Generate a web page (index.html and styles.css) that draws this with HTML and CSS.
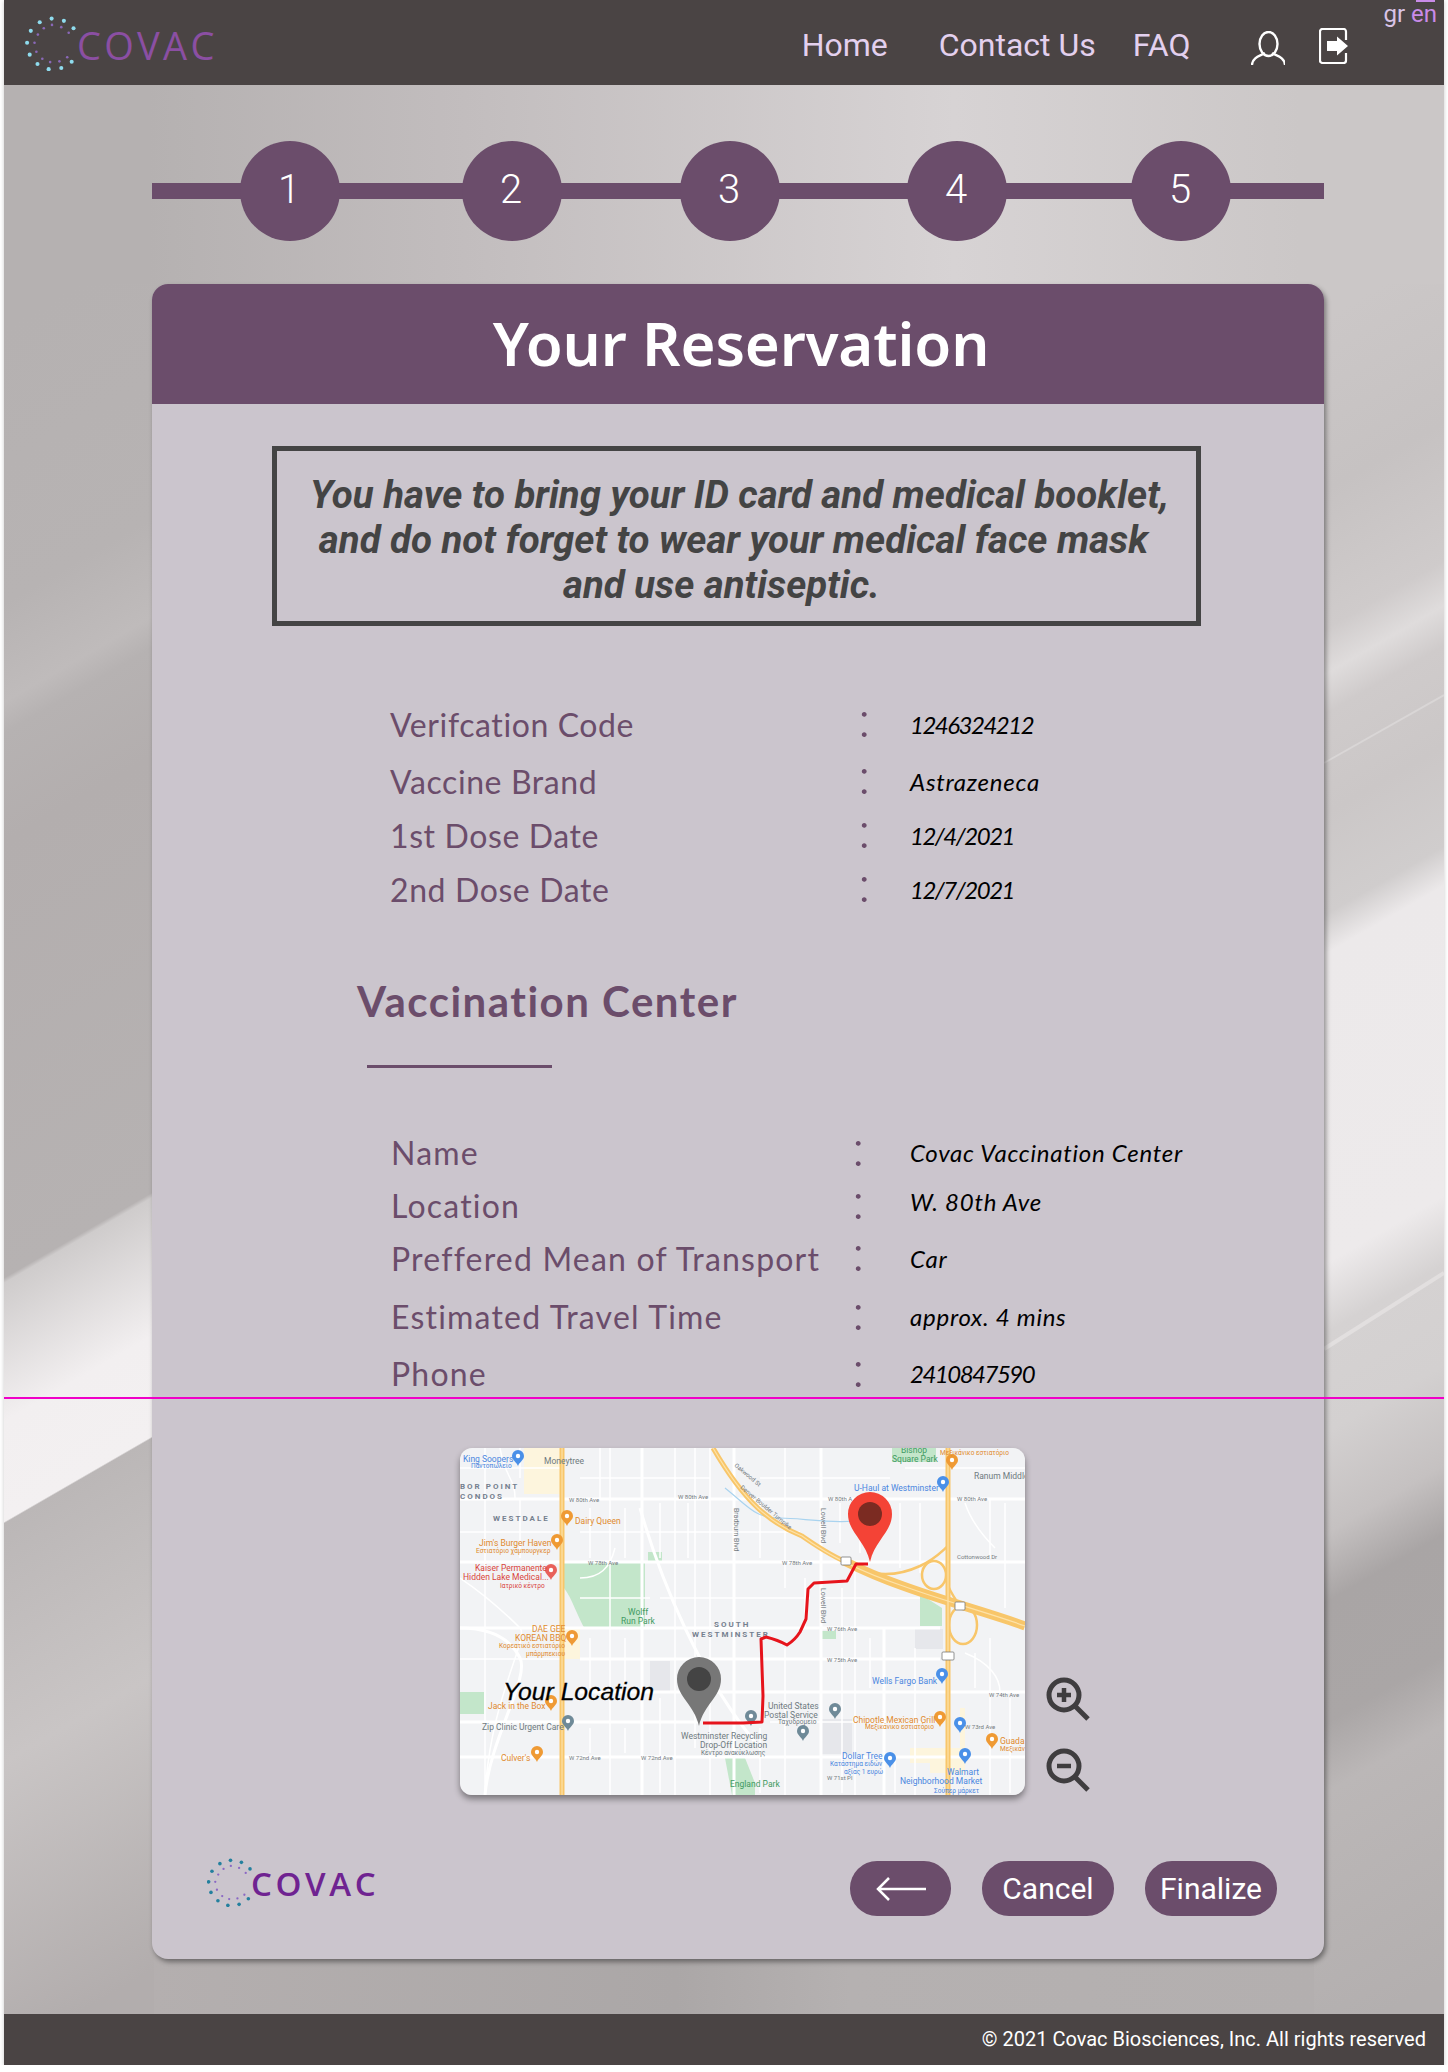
FILE: index.html
```html
<!DOCTYPE html>
<html lang="en">
<head>
<meta charset="utf-8">
<title>Your Reservation - Covac</title>
<link rel="stylesheet" href="styles.css">
</head>
<body>
<svg class="defs" width="0" height="0" aria-hidden="true">
  <defs>
    <symbol id="dots" viewBox="48 52 136 148">
      <g class="dots-outer">
        <circle cx="119" cy="59" r="5.500"/><circle cx="152" cy="65" r="5.500"/><circle cx="178" cy="85" r="5.500"/><circle cx="87" cy="69" r="5.500"/><circle cx="63" cy="92" r="5.500"/><circle cx="53" cy="124" r="5.500"/><circle cx="60" cy="156" r="5.500"/><circle cx="81" cy="181" r="5.500"/><circle cx="111" cy="195" r="5.500"/><circle cx="145" cy="192" r="5.500"/><circle cx="173" cy="175" r="5.500"/>
      </g>
      <g class="dots-inner">
        <circle cx="120" cy="76" r="3.5"/><circle cx="145" cy="82" r="3.5"/><circle cx="165" cy="97" r="3.5"/><circle cx="98" cy="85" r="3.5"/><circle cx="82" cy="102" r="3.5"/><circle cx="73" cy="124" r="3.5"/><circle cx="78" cy="148" r="3.5"/><circle cx="94" cy="167" r="3.5"/><circle cx="115" cy="176" r="3.5"/><circle cx="140" cy="174" r="3.5"/><circle cx="161" cy="163" r="3.5"/>
      </g>
    </symbol>
    <g id="mpin"><path d="M0 7C-1.500 3-6 1-6-3A6 6 0 1 1 6-3C6 1 1.500 3 0 7Z"/><circle cy="-3" r="2.200" fill="#fff"/></g>
  </defs>
</svg>
<div class="page">
  <svg class="backdrop" viewBox="0 0 1440 2065" aria-hidden="true">
    <defs>
      <linearGradient id="topstrip" x1="0" y1="0" x2="1" y2="0">
        <stop offset="0" stop-color="#b5b1b1"/><stop offset=".1" stop-color="#b5b1b1"/><stop offset=".32" stop-color="#c2bdbe"/><stop offset=".66" stop-color="#d7d3d4"/><stop offset=".9" stop-color="#cbc7c7"/><stop offset="1" stop-color="#cbc7c7"/>
      </linearGradient>
      <linearGradient id="leftcol" gradientUnits="userSpaceOnUse" x1="74" y1="284" x2="823" y2="1581">
        <stop offset="0" stop-color="#b5b1b1"/><stop offset=".16" stop-color="#b7b3b3"/><stop offset=".217" stop-color="#bfbbbb"/><stop offset=".235" stop-color="#b6b2b2"/><stop offset=".298" stop-color="#b3aeae"/><stop offset=".55" stop-color="#b6b2b2"/><stop offset=".553" stop-color="#cfcccc"/><stop offset=".633" stop-color="#f2eff0"/><stop offset=".691" stop-color="#f3f0f1"/><stop offset=".692" stop-color="#bbb7b7"/><stop offset=".83" stop-color="#c9c5c5"/><stop offset="1" stop-color="#b2adad"/>
      </linearGradient>
      <linearGradient id="rightcol" gradientUnits="userSpaceOnUse" x1="1380" y1="284" x2="2129" y2="1581">
        <stop offset="0" stop-color="#cbc7c7"/><stop offset=".1" stop-color="#c6c2c2"/><stop offset=".18" stop-color="#cfcbcb"/><stop offset=".206" stop-color="#dfdcdc"/><stop offset=".229" stop-color="#cfcbcb"/><stop offset=".287" stop-color="#cbc7c7"/><stop offset=".345" stop-color="#d0cdcd"/><stop offset=".368" stop-color="#ece9ea"/><stop offset=".547" stop-color="#edeaeb"/><stop offset=".587" stop-color="#d5d2d2"/><stop offset=".645" stop-color="#d3d0d0"/><stop offset=".703" stop-color="#c5c1c1"/><stop offset=".743" stop-color="#a9a5a5"/><stop offset=".813" stop-color="#aaa6a6"/><stop offset=".853" stop-color="#bbb7b7"/><stop offset="1" stop-color="#b3afaf"/>
      </linearGradient>
      <linearGradient id="bottomstrip" x1="0" y1="0" x2="1" y2="0">
        <stop offset="0" stop-color="#b4afaf"/><stop offset=".45" stop-color="#aba7a7"/><stop offset=".6" stop-color="#b5b1b1"/><stop offset="1" stop-color="#b3afaf"/>
      </linearGradient>
    </defs>
    <rect x="0" y="85" width="1440" height="220" fill="url(#topstrip)"/>
    <rect x="0" y="284" width="170" height="1730" fill="url(#leftcol)"/>
    <rect x="1300" y="284" width="140" height="1730" fill="url(#rightcol)"/>
    <rect x="150" y="1940" width="1160" height="74" fill="url(#bottomstrip)"/>
    <path d="M1320 763L1440 695" stroke="#d9d6d6" stroke-width="2"/>
    <path d="M1320 1349L1440 1273" stroke="#e2dfdf" stroke-width="4"/>
  </svg>

  <header class="topbar">
    <a class="brand">
      <svg class="brand-dots brand-dots-light"><use href="#dots"/></svg>
      <span class="brand-name">COVAC</span>
    </a>
    <nav class="nav">
      <a class="nav-home">Home</a>
      <a class="nav-contact">Contact Us</a>
      <a class="nav-faq">FAQ</a>
    </nav>
    <svg class="icon-user" viewBox="0 0 34 34" aria-label="Profile">
      <ellipse cx="17.500" cy="13" rx="9" ry="12"/>
      <path d="M1 33.500C2 26 9 25 13 22.500M34 33.500C33 26 26 25 22 22.500"/>
    </svg>
    <svg class="icon-logout" viewBox="0 0 30 36" aria-label="Log out">
      <path class="outline" d="M27 12V3.500A2.500 2.500 0 0 0 24.500 1H3.500A2.500 2.500 0 0 0 1 3.500V32.500A2.500 2.500 0 0 0 3.500 35H24.500A2.500 2.500 0 0 0 27 32.500V25"/>
      <path class="solid" d="M8 13H18V8.500L29 18L18 27.500V23H8Z"/>
    </svg>
    <div class="lang"><span class="lang-gr">gr</span> <span class="lang-en">en</span></div>
  </header>

  <ol class="stepper">
    <li class="step">1</li>
    <li class="step">2</li>
    <li class="step">3</li>
    <li class="step">4</li>
    <li class="step">5</li>
  </ol>

  <main class="card">
    <h1 class="card-title">Your Reservation</h1>

    <p class="notice">
      <span class="notice-line notice-line-a">You have to bring your ID card and medical booklet,</span>
      <span class="notice-line notice-line-b">and do not forget to wear your medical face mask</span>
      <span class="notice-line notice-line-c">and use antiseptic.</span>
    </p>

    <dl class="info info-reservation">
      <dt>Verifcation Code</dt><dd class="colon">:</dd><dd class="value digits">1246324212</dd>
      <dt>Vaccine Brand</dt><dd class="colon">:</dd><dd class="value">Astrazeneca</dd>
      <dt>1st Dose Date</dt><dd class="colon">:</dd><dd class="value digits">12/4/2021</dd>
      <dt>2nd Dose Date</dt><dd class="colon">:</dd><dd class="value digits">12/7/2021</dd>
    </dl>

    <h2 class="section-title">Vaccination Center</h2>
    <hr class="section-rule">

    <dl class="info info-center">
      <dt>Name</dt><dd class="colon">:</dd><dd class="value">Covac Vaccination Center</dd>
      <dt>Location</dt><dd class="colon">:</dd><dd class="value value-up">W. 80th Ave</dd>
      <dt>Preffered Mean of Transport</dt><dd class="colon">:</dd><dd class="value">Car</dd>
      <dt>Estimated Travel Time</dt><dd class="colon">:</dd><dd class="value">approx. 4 mins</dd>
      <dt>Phone</dt><dd class="colon">:</dd><dd class="value digits">2410847590</dd>
    </dl>

    <section class="map-row">
      <svg class="map" viewBox="0 0 565 347" aria-label="Map of the route">
        <rect width="565" height="347" fill="#f2f3f5"/>
        <g fill="#fdf5dd">
          <rect x="64" y="0" width="36" height="46"/><rect x="104" y="181" width="16" height="30"/>
          <path d="M450 300H500V260H505V325H470V315H450Z"/>
        </g>
        <g fill="#c3e6ca">
          <path d="M104 114H185V181H125C118 170 112 150 104 140Z"/>
          <rect x="0" y="244" width="24" height="22"/>
          <path d="M265 310H285L295 335V347H272Z"/>
          <rect x="432" y="0" width="44" height="14"/>
          <path d="M460 146L482 160V178H460Z"/>
          <rect x="361" y="183" width="15" height="8"/>
          <rect x="188" y="104" width="14" height="10"/>
        </g>
        <g fill="#e6e7eb">
          <rect x="361" y="271" width="31" height="35"/><rect x="455" y="181" width="28" height="20"/><rect x="190" y="213" width="20" height="30"/>
        </g>
        <g class="road-minor">
          <path d="M0 20H100M120 30H250M300 30H430M445 20H565M0 84H100M120 84H340M120 150H190M200 150H350M360 150H460M0 211H100M120 211H250M310 211H480M120 244H250M310 244H480M500 244H565M0 274H100M120 274H240M310 274H480M25 0V347M60 0V30M60 50V110M150 0V347M215 0V347M235 0V300M250 0V347M325 0V140M325 200V347M395 120V347M455 200V347M530 50V110M530 190V347M0 130C30 150 50 170 60 180S30 250 25 347"/>
          <path d="M130 60V110M140 0V50M165 60V110M200 55V110M228 55V110M300 55V110M380 55V95M400 55V105M440 55V120M460 55V125M130 190V240M165 190V240M200 250V345M300 280V345M345 130V180M382 140V345M410 190V240M515 205V240M545 55V160M130 280V305M165 280V305M435 345V310M550 250V345M505 55C510 70 520 85 535 100M505 205C530 215 540 230 540 244M120 130C140 130 150 120 155 100M40 0C45 30 55 30 55 50"/>
        </g>
        <g class="road-major">
          <path d="M0 51H565M0 114H565M0 180H480M120 211H480M120 244H565M0 274H240M0 309H565M182 0V347M274 0V347M361 0V347M424 180V347"/>
          <path d="M0 180C30 180 50 190 60 210S30 290 25 347M180 60C200 130 240 230 300 300"/>
        </g>
        <path class="river" d="M265 40C290 60 295 70 320 70S380 78 420 70"/>
        <g class="road-yellow">
          <path d="M102 0V347"/><path d="M488 0V347"/>
          <path d="M253 0C285 55 310 75 342 88C355 97 368 106 384 113"/>
        </g>
        <path class="road-yellow-wide" d="M384 113C400 121 420 130 443 138C490 155 530 165 565 178"/>
        <g class="road-ramp">
          <path d="M401 122C425 130 445 125 460 118S480 105 488 98"/>
          <ellipse cx="474" cy="127" rx="12" ry="14"/>
          <ellipse cx="503" cy="177" rx="14" ry="19"/>
          <path d="M486 132C490 145 495 150 500 158"/>
        </g>
        <g class="road-yellow-core">
          <path d="M102 0V347"/><path d="M488 0V347"/>
          <path d="M253 0C285 55 310 75 342 88C365 105 395 122 443 138C490 155 530 165 565 178"/>
        </g>
        <g class="shield" transform="translate(386 113)"><rect x="-5" y="-4" width="10" height="8" rx="1"/></g>
        <g class="shield" transform="translate(500 158)"><rect x="-5" y="-4" width="10" height="8" rx="1"/></g>
        <g class="shield" transform="translate(488 208)"><rect x="-6" y="-4" width="12" height="8" rx="1"/></g>

        <g class="mp-blue"><use href="#mpin" x="58" y="11"/><use href="#mpin" x="483" y="37"/><use href="#mpin" x="482" y="229"/><use href="#mpin" x="500" y="278"/><use href="#mpin" x="430" y="313"/><use href="#mpin" x="505" y="309"/></g>
        <g class="mp-orange"><use href="#mpin" x="107" y="71"/><use href="#mpin" x="97" y="95"/><use href="#mpin" x="112" y="191"/><use href="#mpin" x="91" y="256"/><use href="#mpin" x="77" y="307"/><use href="#mpin" x="492" y="15"/><use href="#mpin" x="480" y="272"/><use href="#mpin" x="532" y="294"/></g>
        <g class="mp-red"><use href="#mpin" x="91" y="125"/></g>
        <g class="mp-gray"><use href="#mpin" x="108" y="276"/><use href="#mpin" x="291" y="271"/><use href="#mpin" x="343" y="286"/><use href="#mpin" x="375" y="264"/></g>

        <g class="ml ml-blue">
          <text x="3" y="14">King Soopers</text><text class="ml-s" x="11" y="20">Παντοπωλείο</text>
          <text x="394" y="43">U-Haul at Westminster</text><text x="412" y="236">Wells Fargo Bank</text>
          <text x="382" y="311">Dollar Tree</text><text class="ml-s" x="370" y="318">Κατάστημα ειδών</text><text class="ml-s" x="384" y="326">αξίας 1 ευρώ</text>
          <text x="487" y="327">Walmart</text><text x="440" y="336">Neighborhood Market</text><text class="ml-s" x="474" y="345">Σούπερ μάρκετ</text>
        </g>
        <g class="ml ml-orange">
          <text x="115" y="76">Dairy Queen</text><text x="19" y="98">Jim's Burger Haven</text><text class="ml-s" x="16" y="105">Εστιατόριο χάμπουργκερ</text>
          <text x="72" y="184">DAE GEE</text><text x="55" y="193">KOREAN BBQ</text><text class="ml-s" x="39" y="200">Κορεατικό εστιατόριο</text><text class="ml-s" x="66" y="208">μπάρμπεκιου</text>
          <text x="28" y="261">Jack in the Box</text><text x="41" y="313">Culver's</text>
          <text class="ml-s" x="480" y="7">Μεξικάνικο εστιατόριο</text>
          <text x="393" y="275">Chipotle Mexican Grill</text><text class="ml-s" x="405" y="281">Μεξικάνικο εστιατόριο</text>
          <text x="540" y="296">Guada</text><text class="ml-s" x="540" y="303">Μεξικάν</text>
        </g>
        <g class="ml ml-red">
          <text x="15" y="123">Kaiser Permanente</text><text x="3" y="132">Hidden Lake Medical...</text><text class="ml-s" x="40" y="140">Ιατρικό κέντρο</text>
        </g>
        <g class="ml ml-green">
          <text x="168" y="167">Wolff</text><text x="161" y="176">Run Park</text><text x="270" y="339">England Park</text>
          <text x="441" y="5">Bishop</text><text x="432" y="14">Square Park</text>
        </g>
        <g class="ml ml-gray">
          <text x="84" y="16">Moneytree</text><text x="514" y="31">Ranum Middle</text>
          <text x="22" y="282">Zip Clinic Urgent Care</text>
          <text x="221" y="291">Westminster Recycling</text><text x="240" y="300">Drop-Off Location</text><text class="ml-s" x="241" y="307">Κέντρο ανακύκλωσης</text>
          <text x="308" y="261">United States</text><text x="304" y="270">Postal Service</text><text class="ml-s" x="318" y="276">Ταχυδρομείο</text>
        </g>
        <g class="ml-road">
          <text x="109" y="54">W 80th Ave</text><text x="218" y="51">W 80th Ave</text><text x="368" y="53">W 80th A</text><text x="497" y="53">W 80th Ave</text>
          <text x="128" y="117">W 78th Ave</text><text x="322" y="117">W 78th Ave</text><text x="497" y="111">Cottonwood Dr</text>
          <text x="367" y="183">W 76th Ave</text><text x="367" y="214">W 75th Ave</text><text x="529" y="249">W 74th Ave</text><text x="505" y="281">W 73rd Ave</text>
          <text x="109" y="312">W 72nd Ave</text><text x="181" y="312">W 72nd Ave</text><text x="367" y="332">W 71st Pl</text>
          <text x="274" y="18" transform="rotate(40 274 18)">Oakwood St</text>
          <text x="280" y="40" transform="rotate(40 280 40)">Denver-Boulder Turnpike</text>
          <text class="ml-vert" x="274" y="60" transform="rotate(90 274 60)">Bradburn Blvd</text>
          <text class="ml-vert" x="361" y="60" transform="rotate(90 361 60)">Lowell Blvd</text>
          <text class="ml-vert" x="361" y="140" transform="rotate(90 361 140)">Lowell Blvd</text>
        </g>
        <g class="ml-area">
          <text x="0" y="41">BOR POINT</text><text x="0" y="51">CONDOS</text><text x="33" y="73">WESTDALE</text><text x="254" y="179">SOUTH</text><text x="232" y="189">WESTMINSTER</text>
        </g>

        <path class="route" d="M243 275L283 275L302 274L303 248L301 191L306 189Q318 192 327 197Q335 192 340 184L346 171L348 141L354 135L387 133L396 116L408 116"/>
        <path class="pin-red" d="M410 114C405 92 388 84 388 66A22 22 0 1 1 432 66C432 84 415 92 410 114Z"/>
        <circle class="pin-red-core" cx="410" cy="66" r="12"/>
        <path class="pin-gray" d="M239 278C234 256 217 249 217 231A22 22 0 1 1 261 231C261 249 244 256 239 278Z"/>
        <circle class="pin-gray-core" cx="239" cy="231" r="12"/>
        <text class="map-you" x="43" y="252">Your Location</text>
      </svg>
      <div class="zoom-tools">
        <svg class="zoom-icon" viewBox="0 0 44 44" aria-label="Zoom in">
          <circle cx="18" cy="18" r="15"/><path d="M29 29L42 42"/><path class="glyph" d="M11 18H25M18 11V25"/>
        </svg>
        <svg class="zoom-icon" viewBox="0 0 44 44" aria-label="Zoom out">
          <circle cx="18" cy="18" r="15"/><path d="M29 29L42 42"/><path class="glyph" d="M11 18H25"/>
        </svg>
      </div>
    </section>

    <div class="card-foot">
      <div class="foot-brand">
        <svg class="foot-dots"><use href="#dots"/></svg>
        <span class="foot-name">COVAC</span>
      </div>
      <div class="actions">
        <button class="btn btn-back" aria-label="Back">
          <svg class="back-arrow" viewBox="0 0 50 24"><path d="M50 12H3M13 1L2 12L13 23"/></svg>
        </button>
        <button class="btn">Cancel</button>
        <button class="btn">Finalize</button>
      </div>
    </div>
  </main>

  <div class="magenta-rule"></div>

  <footer class="bottombar">© 2021 Covac Biosciences, Inc. All rights reserved</footer>
</div>
</body>
</html>
```

FILE: styles.css
```css
* { box-sizing: border-box; }
html, body { margin: 0; padding: 0; background: #fff; }
body { font-family: "Roboto", "Liberation Sans", sans-serif; }

.defs { position: absolute; }
.dots-outer { fill: var(--dot-outer, #24809e); }
.dots-inner { fill: var(--dot-inner, #8a68c4); }

.page {
  position: relative;
  width: 1440px;
  margin-left: 4px;
  display: flex;
  flex-direction: column;
  box-shadow: 0 1px 4px rgba(0, 0, 0, .22);
}
.backdrop { position: absolute; left: 0; top: 0; width: 1440px; height: 2065px; }

/* top bar */
.topbar {
  position: relative;
  height: 85px;
  background: #4a4444;
  display: flex;
  align-items: flex-start;
}
.brand { display: flex; align-items: flex-start; margin: 16px 0 0 21px; }
.brand-dots { width: 51px; height: 55px; }
.brand-dots-light { --dot-outer: #8fdcee; --dot-inner: #8a68b8; }
.brand-name {
  font-family: "Open Sans", sans-serif;
  font-size: 38px;
  font-weight: 500;
  line-height: 52px;
  margin: 3px 0 0 1px;
  letter-spacing: 3.3px;
  color: #8b4fa3;
}
.nav {
  display: flex;
  margin: 24px 0 0 584px;
  font-size: 32px;
  line-height: 42px;
  color: #e3d0ee;
}
.nav-contact { margin-left: 51px; }
.nav-faq { margin-left: 37px; }
.icon-user { width: 34px; height: 34px; margin: 31px 0 0 60px; flex: none; }
.icon-user ellipse, .icon-user path { fill: none; stroke: #fff; stroke-width: 2.4; stroke-linecap: round; }
.icon-logout { width: 30px; height: 36px; margin: 28px 0 0 34px; flex: none; }
.icon-logout .outline { fill: none; stroke: #fff; stroke-width: 2.2; }
.icon-logout .solid { fill: #fff; }
.lang {
  position: absolute;
  right: 7px;
  top: 0;
  font-size: 24px;
  line-height: 28px;
  color: #d8c3e6;
}
.lang-en { color: #c98be8; position: relative; }
.lang-en::before {
  content: "";
  position: absolute;
  left: 5px;
  right: 2px;
  top: 0;
  height: 2px;
  background: #c98be8;
}

/* stepper */
.stepper {
  position: relative;
  list-style: none;
  width: 1172px;
  height: 100px;
  margin: 56px 0 0 148px;
  padding: 0 0 0 88px;
  display: grid;
  grid-template-columns: 222px 218px 227px 224px 100px;
  background: linear-gradient(#6b4d6b, #6b4d6b) center / 100% 16px no-repeat;
}
.step {
  width: 100px;
  height: 100px;
  border-radius: 50%;
  background: #6b4d6b;
  color: #fff;
  font-size: 40px;
  font-weight: 300;
  line-height: 98px;
  text-align: center;
  padding-right: 2px;
}

/* card */
.card {
  position: relative;
  width: 1172px;
  margin: 43px 0 0 148px;
  background: #cbc5cd;
  border-radius: 16px;
  box-shadow: 2px 3px 5px rgba(0, 0, 0, .4);
  padding-bottom: 43px;
}
.card-title {
  margin: 0;
  height: 120px;
  background: #6b4d6b;
  border-radius: 16px 16px 0 0;
  color: #fff;
  font-family: "Noto Sans", sans-serif;
  font-size: 60px;
  font-weight: 600;
  line-height: 118px;
  letter-spacing: -.15px;
  text-align: center;
  padding-left: 6px;
}
.notice {
  width: 929px;
  height: 180px;
  margin: 42px 0 0 120px;
  padding-top: 21px;
  border: 5px solid #444;
  color: #444;
  font-size: 38.4px;
  font-weight: 700;
  font-style: italic;
  line-height: 45px;
  text-align: center;
}
.notice-line { display: block; white-space: nowrap; }
.notice-line-a { padding-left: 6px; }
.notice-line-b { padding-right: 6px; }
.notice-line-c { padding-right: 30px; }

.info {
  display: grid;
  margin: 0 0 0 239px;
  grid-template-columns: 462px 57px 1fr;
  align-items: center;
  font-family: "Lato", sans-serif;
}
.info dt { font-size: 32px; color: #6b4d6b; white-space: nowrap; }
.info dd { margin: 0; }
.info .colon {
  font-size: 52px;
  font-weight: 300;
  color: #6b4d6b;
  line-height: 40px;
  padding-bottom: 14px;
}
.info .value { font-size: 24px; font-style: italic; letter-spacing: .75px; color: #000; }
.info .digits { letter-spacing: -1.5px; }
.info .value-up { padding-bottom: 8px; }
.info-reservation { margin-top: 71px; grid-template-rows: 54px 60px 48px 60px; }
.info-reservation dt { letter-spacing: .6px; margin-left: -1px; }
.info-reservation .colon { padding-left: 5px; }
.info-center { margin-top: 58px; grid-template-rows: 53px 53px 52px 65px 49px; }
.info-center dt { letter-spacing: 1.2px; }
.info-center .colon { margin-left: -1px; }

.section-title {
  margin: 52px 0 0 205px;
  font-family: "Lato", sans-serif;
  font-size: 42px;
  font-weight: 700;
  line-height: 60px;
  letter-spacing: 1.5px;
  color: #6b4d6b;
}
.section-rule {
  width: 185px;
  height: 3px;
  margin: 34px 0 0 215px;
  border: 0;
  background: #6b4d6b;
}

/* map */
.map-row { display: flex; align-items: flex-end; margin: 50px 0 0 308px; }
.map {
  display: block;
  width: 565px;
  height: 347px;
  border-radius: 12px;
  box-shadow: 0 4px 6px rgba(0, 0, 0, .4);
}
.road-minor { fill: none; stroke: #fff; stroke-width: 1.5; }
.road-major { fill: none; stroke: #fff; stroke-width: 3; }
.river { fill: none; stroke: #a9d3ef; stroke-width: 1.2; }
.road-yellow { fill: none; stroke: #f8c66a; stroke-width: 5; }
.road-yellow-wide { fill: none; stroke: #f8c66a; stroke-width: 9; }
.road-ramp { fill: none; stroke: #f8c66a; stroke-width: 2.5; }
.road-yellow-core { fill: none; stroke: #fde2a8; stroke-width: 1.2; }
.shield rect { fill: #fff; stroke: #777; stroke-width: .8; }
.mp-blue { fill: #4a90e8; }
.mp-orange { fill: #ef9a34; }
.mp-red { fill: #e8605a; }
.mp-gray { fill: #6f8a98; }
.ml { font-family: "Roboto", sans-serif; font-size: 8.5px; }
.ml-s { font-size: 6.5px; }
.ml-blue { fill: #4a86e0; }
.ml-orange { fill: #e08a2e; }
.ml-red { fill: #d9433b; }
.ml-green { fill: #3f9a62; }
.ml-gray { fill: #6e7a80; }
.ml-road { font-family: "Roboto", sans-serif; font-size: 6px; fill: #747b80; }
.ml-vert { font-size: 7px; }
.ml-area { font-family: "Roboto", sans-serif; font-size: 8px; font-weight: 700; letter-spacing: 2px; fill: #75808f; }
.route { fill: none; stroke: #e6141c; stroke-width: 3; stroke-linejoin: round; }
.pin-red { fill: #f44336; }
.pin-red-core { fill: #7b2b22; }
.pin-gray { fill: #777; }
.pin-gray-core { fill: #444; }
.map-you { font-family: "Liberation Sans", sans-serif; font-style: italic; font-size: 24.7px; fill: #000; stroke: #000; stroke-width: .3; }

.zoom-tools { display: flex; flex-direction: column; gap: 27px; margin: 0 0 3px 21px; }
.zoom-icon { display: block; width: 44px; height: 44px; fill: none; stroke: #3f3d3f; stroke-width: 5; }
.zoom-icon .glyph { stroke-width: 4.500; }

/* card footer */
.card-foot { display: flex; justify-content: space-between; margin: 63px 47px 0 55px; }
.foot-brand { display: flex; align-items: flex-start; }
.foot-dots { width: 45px; height: 49px; }
.foot-name {
  font-family: "Open Sans", sans-serif;
  font-size: 33px;
  font-weight: 600;
  line-height: 40px;
  margin: 6px 0 0 -1px;
  color: #6f2391;
  letter-spacing: 3.6px;
}
.actions { display: flex; gap: 31px; margin-top: 3px; }
.btn {
  width: 132px;
  height: 55px;
  padding: 0;
  border: 0;
  border-radius: 27px;
  background: #6b4d6b;
  color: #fff;
  font-family: "Roboto", sans-serif;
  font-size: 30px;
  line-height: 55px;
}
.btn-back { width: 101px; }
.back-arrow { display: block; width: 50px; height: 24px; margin: 0 auto; fill: none; stroke: #fff; stroke-width: 2.500; }

.magenta-rule {
  position: absolute;
  left: 0;
  right: 0;
  top: 1397px;
  height: 2px;
  background: #f000c8;
}

.bottombar {
  position: relative;
  height: 51px;
  margin-top: 55px;
  padding-right: 18px;
  background: #4a4444;
  color: #fff;
  font-size: 20px;
  line-height: 50px;
  text-align: right;
}
```
